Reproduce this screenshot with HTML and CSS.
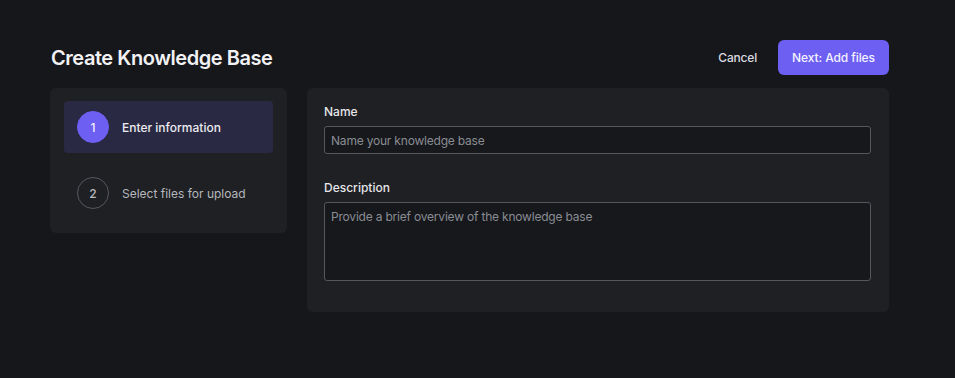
FILE: index.html
```html
<!DOCTYPE html>
<html lang="en">
<head>
<meta charset="utf-8">
<title>Create Knowledge Base</title>
<link rel="stylesheet" href="styles.css">
</head>
<body>
<div class="page">
  <header class="header">
    <h1 class="title">Create Knowledge Base</h1>
    <div class="actions">
      <button class="btn-cancel" type="button">Cancel</button>
      <button class="btn-primary" type="button">Next: Add files</button>
    </div>
  </header>
  <div class="content">
    <nav class="steps">
      <div class="step step-active">
        <span class="step-num">1</span>
        <span class="step-label">Enter information</span>
      </div>
      <div class="step">
        <span class="step-num">2</span>
        <span class="step-label">Select files for upload</span>
      </div>
    </nav>
    <form class="form">
      <label class="field">
        <span class="field-label">Name</span>
        <input class="input" type="text" placeholder="Name your knowledge base">
      </label>
      <label class="field field-desc">
        <span class="field-label">Description</span>
        <textarea class="textarea" placeholder="Provide a brief overview of the knowledge base"></textarea>
      </label>
    </form>
  </div>
</div>
</body>
</html>
```

FILE: styles.css
```css
* { box-sizing: border-box; }
html, body {
  margin: 0;
  background: #16171b;
  font-family: Inter, "Noto Sans", "Liberation Sans", sans-serif;
  color: #e8e8ea;
}
.page {
  width: 839px;
  margin-left: 50px;
  padding-top: 40px;
}
.header {
  display: flex;
  align-items: center;
  justify-content: space-between;
  height: 35px;
}
.title {
  margin: 0 0 0 1px;
  font-size: 20px;
  font-weight: 600;
  color: #f2f2f4;
  letter-spacing: -0.45px;
}
.actions {
  display: flex;
  align-items: center;
  gap: 21px;
}
.btn-cancel {
  background: none;
  border: none;
  padding: 0;
  font: inherit;
  font-size: 12px;
  font-weight: 500;
  letter-spacing: -0.2px;
  color: #dcdce0;
}
.btn-primary {
  width: 111px;
  height: 35px;
  border: none;
  border-radius: 6px;
  background: #6d5ff1;
  color: #f4f3ff;
  font: inherit;
  font-size: 12px;
  font-weight: 500;
  letter-spacing: -0.1px;
}
.content {
  display: flex;
  align-items: flex-start;
  gap: 20px;
  margin-top: 13px;
}
.steps {
  width: 237px;
  background: #1f2024;
  border-radius: 6px;
  padding: 13px 14px 14px;
  display: flex;
  flex-direction: column;
  gap: 14px;
}
.step {
  height: 52px;
  display: flex;
  align-items: center;
  padding-left: 13px;
  border-radius: 4px;
  gap: 13px;
}
.step-active {
  background: #2a2943;
}
.step-num {
  width: 32px;
  height: 32px;
  border-radius: 50%;
  border: 1px solid #55575d;
  display: flex;
  align-items: center;
  justify-content: center;
  font-size: 12px;
  font-weight: 500;
  color: #b8b9be;
}
.step-active .step-num {
  background: #6d5ff1;
  border-color: #6d5ff1;
  color: #f2f0ff;
}
.step-label {
  font-size: 12px;
  color: #b6b7bc;
}
.step-active .step-label {
  color: #ececf0;
  font-weight: 500;
}
.form {
  flex: 1;
  background: #1f2024;
  border-radius: 6px;
  padding: 14px 18px 31px 17px;
  display: flex;
  flex-direction: column;
  gap: 24px;
}
.field {
  display: flex;
  flex-direction: column;
  gap: 4px;
}
.field-label {
  font-size: 12px;
  font-weight: 500;
  line-height: 20px;
  color: #e6e6ea;
}
.input, .textarea {
  width: 100%;
  background: #16181c;
  border: 1px solid #55575d;
  border-radius: 3px;
  font: inherit;
  font-size: 12px;
  letter-spacing: -0.2px;
  color: #e6e6ea;
  padding: 0 6px;
  outline: none;
}
.input {
  height: 28px;
}
.textarea {
  height: 79px;
  padding-top: 6px;
  resize: none;
  display: block;
}
.input::placeholder, .textarea::placeholder {
  color: #8a8c93;
}
```
